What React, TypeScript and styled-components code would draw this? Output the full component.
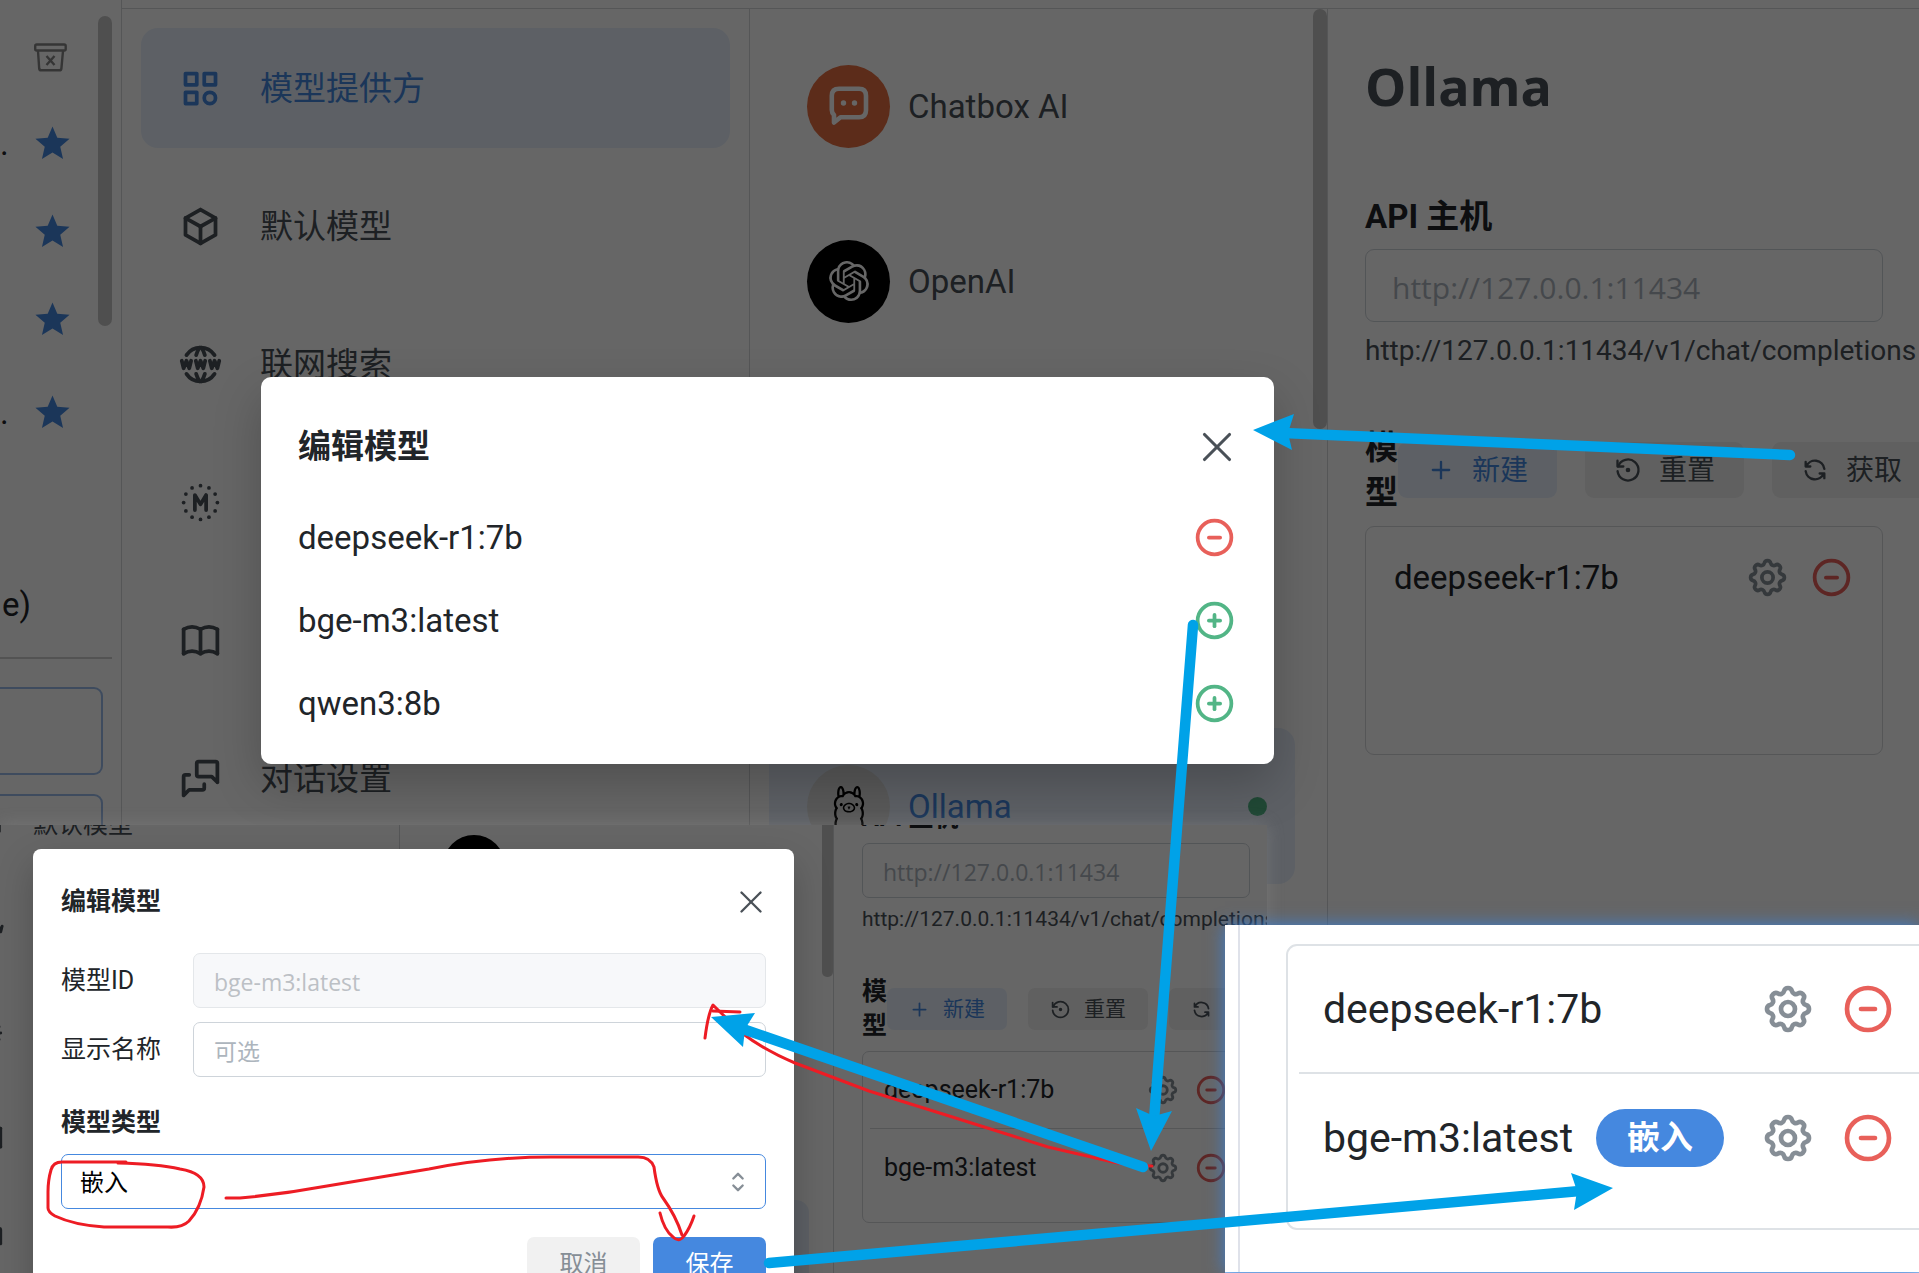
import React from 'react';
import styled, { createGlobalStyle, css, ThemeProvider } from 'styled-components';
import {
  TbBook,
  TbBox,
  TbCategory,
  TbCircleDottedLetterM,
  TbCircleMinus,
  TbCirclePlus,
  TbMessages,
  TbPlus,
  TbRefresh,
  TbRestore,
  TbSelector,
  TbSettings,
  TbWorldWww,
  TbX,
} from 'react-icons/tb';
import { MdStar } from 'react-icons/md';
import { SiOllama, SiOpenai } from 'react-icons/si';

/* Every screen is drawn by the same parts; the theme says how large. */
const u =
  (n: number) =>
  ({ theme }: any) =>
    `${Math.round(n * theme.k)}px`;

const uiFont = `Roboto, 'Noto Sans CJK SC', sans-serif`;
const fieldFont = `'Open Sans', 'Noto Sans CJK SC', sans-serif`;

const color = {
  text: '#212529',
  muted: '#495057',
  dimmed: '#868e96',
  placeholder: '#adb5bd',
  border: '#dee2e6',
  line: '#d4d7da',
  fieldBorder: '#ced4da',
  blue: '#4588df',
  blueLight: '#e8f1fd',
  grey: '#f0f0f0',
  red: '#e8605a',
  green: '#52b586',
  arrow: '#00a2e8',
  pen: '#ed1c24',
};

const GlobalStyle = createGlobalStyle`
  *, *::before, *::after { box-sizing: border-box; }
  html, body { margin: 0; overflow: hidden; }
  body { font-family: ${uiFont}; color: ${color.text}; background: #fff; }
  h1, h2, h3, p, ul { margin: 0; padding: 0; }
  ul { list-style: none; }
  button { border: 0; padding: 0; margin: 0; background: none; font: inherit; color: inherit; }
  svg { display: block; flex: none; }
`;

const Desktop = styled.main`
  position: relative;
  min-height: 100vh;
  overflow: hidden;
`;

const Page = styled.div<{ $rail?: boolean }>`
  display: grid;
  grid-template-columns: ${(p) => (p.$rail ? '122px ' : '')} minmax(0, 1fr);
  min-height: 100vh;
  font-size: ${u(33)};
  line-height: ${u(45)};
`;

/* ---------- conversation rail ---------- */

const Rail = styled.aside`
  position: relative;
  display: flex;
  flex-direction: column;
  border-right: 1px solid ${color.line};
`;

const RailScroll = styled.div`
  position: absolute;
  top: 16px;
  right: 9px;
  width: 14px;
  height: 310px;
  border-radius: 7px;
  background: #c6c6c6;
`;

const RailTop = styled.button`
  align-self: flex-start;
  margin: 41px 0 0 34px;
`;

const StarList = styled.ul`
  display: flex;
  flex-direction: column;
  padding-top: 26px;
`;

const StarRow = styled.li`
  display: flex;
  align-items: center;
  height: 88px;
  color: ${color.blue};
  gap: 24px;

  &:last-child {
    margin-top: 5px;
  }
`;

const Ellipsis = styled.span`
  width: 8px;
  text-align: center;
  color: ${color.text};
`;

const RailText = styled.p`
  margin-top: 126px;
  padding-left: 2px;
`;

const RailRule = styled.hr`
  width: 112px;
  margin: 30px 0 28px;
  border: 0;
  border-top: 2px solid #cfcfcf;
`;

const RailBox = styled.div`
  width: 103px;
  height: 88px;
  margin-bottom: 19px;
  border: 2px solid #9bbcec;
  border-left: 0;
  border-radius: 0 9px 9px 0;
`;

/* ---------- settings area ---------- */

const Settings = styled.div`
  display: flex;
  flex-direction: column;
  min-width: 0;
`;

const TopBar = styled.div`
  height: ${u(9)};
  border-bottom: 1px solid ${color.line};
`;

const Columns = styled.div`
  flex: 1;
  display: grid;
  grid-template-columns: ${u(628)} ${u(578)} minmax(0, 1fr);
`;

const Nav = styled.nav`
  display: flex;
  flex-direction: column;
  gap: ${u(18)};
  padding: ${u(19)};
  border-right: 1px solid ${color.line};
`;

const NavItem = styled.a<{ $active?: boolean }>`
  display: flex;
  align-items: center;
  flex: none;
  gap: ${u(37)};
  height: ${u(120)};
  padding-left: ${u(37)};
  border-radius: ${u(17)};
  text-decoration: none;
  color: ${(p) => (p.$active ? color.blue : color.muted)};
  background: ${(p) => (p.$active ? color.blueLight : 'transparent')};

  svg {
    width: ${u(45)};
    height: ${u(45)};
  }
`;

const Providers = styled.div`
  position: relative;
  display: flex;
  flex-direction: column;
  gap: ${u(19)};
  padding: ${u(19)} ${u(32)} ${u(19)} ${u(19)};
  border-right: 1px solid ${color.line};
`;

const ProviderScroll = styled.div`
  position: absolute;
  top: 0;
  right: 0;
  width: ${u(14)};
  height: ${u(420)};
  border-radius: ${u(7)};
  background: #c6c6c6;
`;

const Provider = styled.a<{ $active?: boolean }>`
  display: flex;
  align-items: center;
  flex: none;
  gap: ${u(18)};
  height: ${u(156)};
  padding: 0 ${u(28)} 0 ${u(38)};
  border-radius: ${u(17)};
  text-decoration: none;
  color: ${(p) => (p.$active ? color.blue : color.muted)};
  background: ${(p) => (p.$active ? color.blueLight : 'transparent')};
`;

const Avatar = styled.span<{ $bg: string; $fg: string }>`
  display: grid;
  place-items: center;
  width: ${u(83)};
  height: ${u(83)};
  border-radius: 50%;
  color: ${(p) => p.$fg};
  background: ${(p) => p.$bg};

  svg {
    width: ${u(40)};
    height: ${u(40)};
  }
`;

const Online = styled.span`
  width: ${u(19)};
  height: ${u(19)};
  margin-left: auto;
  border-radius: 50%;
  background: ${color.green};
`;

const Detail = styled.section`
  display: flex;
  flex-direction: column;
  min-width: 0;
  padding: ${u(48)} ${u(36)} 0 ${u(37)};
`;

const DetailTitle = styled.h1`
  font-family: ${fieldFont};
  font-size: ${u(52)};
  font-weight: 700;
  line-height: ${u(58)};
  color: ${color.muted};
  margin-bottom: ${u(79)};
`;

const FieldLabel = styled.label`
  font-weight: 700;
`;

const TextField = styled.input`
  width: 100%;
  min-width: 0;
  height: ${u(73)};
  padding: ${u(4)} ${u(26)} 0;
  border: 1px solid ${color.fieldBorder};
  border-radius: ${u(9)};
  font-family: ${fieldFont};
  font-size: ${u(30)};
  color: ${color.text};
  background: #fff;

  &::placeholder {
    color: ${color.placeholder};
    opacity: 1;
  }

  &:disabled {
    color: #bcc0c5;
    border-color: #e4e7ea;
    background: #f7f8fa;
  }
`;

const HostField = styled(TextField)`
  margin: ${u(10)} 0 ${u(11)};
`;

const Endpoint = styled.p`
  font-size: ${u(28)};
  line-height: ${u(36)};
  color: ${color.muted};
  white-space: nowrap;
`;

const ModelHead = styled.div`
  display: flex;
  align-items: center;
  margin: ${u(56)} 0 ${u(11)};
`;

const ModelLabel = styled.h2`
  flex: 0 0 1em;
  font-size: ${u(33)};
  font-weight: 700;
  line-height: ${u(45)};
`;

const HeadButtons = styled.div`
  display: flex;
  gap: ${u(28)};
`;

const SmallButton = styled.button<{ $primary?: boolean }>`
  display: flex;
  align-items: center;
  flex: none;
  gap: ${u(17)};
  height: ${u(56)};
  padding: 0 ${u(29)};
  border-radius: ${u(9)};
  font-size: ${u(28)};
  white-space: nowrap;
  color: ${(p) => (p.$primary ? color.blue : color.muted)};
  background: ${(p) => (p.$primary ? color.blueLight : color.grey)};

  svg {
    width: ${u(28)};
    height: ${u(28)};
  }
`;

const ModelBox = styled.ul`
  min-height: ${u(229)};
  padding: 0 ${u(9)};
  border: ${(p: any) => (p.theme.k > 1 ? `2px solid ${color.border}` : `1px solid ${color.line}`)};
  border-radius: ${u(9)};
  font-size: ${u(33)};
  line-height: ${u(45)};
`;

const ModelRow = styled.li`
  display: flex;
  align-items: center;
  gap: ${u(18)};
  height: ${u(101)};
  padding: 0 ${u(19)};

  &:not(:first-child) {
    height: ${u(104)};
    border-top: ${(p: any) => (p.theme.k > 1 ? `2px solid ${color.border}` : `1px solid ${color.line}`)};
  }
`;

const ModelName = styled.span`
  white-space: nowrap;
`;

const Tag = styled.span`
  padding: 0 ${u(25)};
  border-radius: ${u(24)};
  font-size: ${u(26)};
  font-weight: 700;
  line-height: ${u(46)};
  color: #fff;
  background: ${color.blue};
`;

const RowActions = styled.span`
  display: flex;
  gap: ${u(19)};
  margin-left: auto;
`;

const IconButton = styled.button<{ $tone: string }>`
  color: ${(p) => p.$tone};

  svg {
    width: ${u(45)};
    height: ${u(45)};
  }
`;

const CloseButton = styled(IconButton)`
  margin-right: ${u(-5)};

  svg {
    width: ${u(50)};
    height: ${u(50)};
  }
`;

/* ---------- dialogs ---------- */

const Dim = styled.div`
  position: absolute;
  inset: 0;
  background: rgba(0, 0, 0, 0.6);
`;

const dialogBase = css`
  position: absolute;
  background: #fff;
  border-radius: ${u(10)};
  box-shadow: 0 ${u(20)} ${u(48)} rgba(0, 0, 0, 0.22);
  font-size: ${u(33)};
  line-height: ${u(45)};
`;

const PickDialog = styled.section`
  ${dialogBase}
  left: 261px;
  top: 377px;
  width: 1013px;
  padding: 47px 37px 19px;
`;

const DialogHead = styled.header`
  display: flex;
  align-items: center;
  justify-content: space-between;
  height: ${u(45)};
`;

const DialogTitle = styled.h2`
  font-size: ${u(33)};
  line-height: ${u(45)};
  font-weight: 700;
`;

const PickList = styled.ul`
  margin-top: 27px;
`;

const PickRow = styled.li`
  display: flex;
  align-items: center;
  justify-content: space-between;
  height: 83px;
`;

const EditDialog = styled.form`
  ${dialogBase}
  left: 33px;
  top: 24px;
  width: 761px;
  padding: 36px 28px;
`;

const FormRows = styled.div`
  display: grid;
  grid-template-columns: 132px minmax(0, 1fr);
  align-items: center;
  row-gap: 14px;
  margin: 34px 0 29px;
`;

const TypeLabel = styled(FieldLabel)`
  display: block;
  margin-bottom: 14px;
`;

const SelectWrap = styled.div`
  position: relative;
  color: ${color.dimmed};

  svg {
    position: absolute;
    right: 14px;
    top: 14px;
    width: 28px;
    height: 28px;
  }
`;

const Select = styled.select`
  appearance: none;
  width: 100%;
  height: 55px;
  padding: 0 18px;
  border: 1px solid ${color.blue};
  border-radius: 7px;
  font-family: ${fieldFont};
  font-size: 24px;
  color: #000;
  background: #fff;
`;

const DialogButtons = styled.div`
  display: flex;
  justify-content: flex-end;
  gap: 13px;
  margin-top: 28px;
`;

const DialogButton = styled.button<{ $primary?: boolean }>`
  width: 113px;
  height: 54px;
  border-radius: 7px;
  font-size: 24px;
  color: ${(p) => (p.$primary ? '#fff' : color.dimmed)};
  background: ${(p) => (p.$primary ? color.blue : '#f1f1f1')};
`;

/* ---------- overlapping windows ---------- */

const EditWindow = styled.div`
  position: absolute;
  left: 0;
  top: 825px;
  bottom: 0;
  width: 1267px;
  overflow: hidden;
  background: #fff;
  box-shadow: 0 0 16px rgba(160, 160, 160, 0.3);
`;

const EditWindowPage = styled.div`
  position: absolute;
  left: -71px;
  right: -10px;
  top: -170px;
`;

const ResultWindow = styled.section`
  position: absolute;
  left: 1225px;
  right: 0;
  top: 925px;
  bottom: 1px;
  display: flex;
  background: #fff;
  box-shadow: 0 0 16px #3f7fd0, 0 1px 0 #9cc4f2;
`;

const ResultClip = styled.div`
  flex: 1;
  min-width: 0;
  margin-left: 13px;
  padding: 19px 0 0 46px;
  overflow: hidden;
  border-left: 2px solid #dfe2ea;

  ul {
    margin-right: -14px;
  }
`;

const Ink = styled.svg`
  position: absolute;
  left: 0;
  top: 0;
  width: 1919px;
  height: 1273px;
  pointer-events: none;
`;

/* ---------- drawings ---------- */

const ArchiveIcon = () => (
  <svg width="33" height="32" viewBox="0 0 33 32" fill="none" stroke="#868686" strokeWidth="2.4" strokeLinejoin="round">
    <rect x="1.2" y="3.5" width="30.5" height="6" rx="1.5" />
    <path d="M4 10l1.2 17.5q.2 1.8 2 1.8h18.2q1.8 0 2-1.8L29 10" />
    <path d="M12.5 15l8 9M20.5 15l-8 9" />
  </svg>
);

const ChatboxLogo = () => (
  <svg viewBox="0 0 40 40" fill="none" stroke="currentColor" strokeWidth="4.6">
    <path
      d="M10 2.8h20q7 0 7 7v14.5q0 7-7 7H11.5L5 36.5V29q-2.2-2-2.2-5V9.8q0-7 7.2-7z"
      strokeLinejoin="round"
    />
    <circle cx="14.5" cy="17" r="2.7" fill="currentColor" stroke="none" />
    <circle cx="25.5" cy="17" r="2.7" fill="currentColor" stroke="none" />
  </svg>
);

type ArrowProps = { from: [number, number]; neck: [number, number]; head: string };

const Arrow = ({ from, neck, head }: ArrowProps) => (
  <g fill={color.arrow} stroke={color.arrow}>
    <line x1={from[0]} y1={from[1]} x2={neck[0]} y2={neck[1]} strokeWidth="10.5" strokeLinecap="round" />
    <polygon points={head} stroke="none" />
  </g>
);

const Annotations = () => (
  <Ink viewBox="0 0 1919 1273" aria-hidden="true">
    <g fill="none" stroke={color.pen} strokeWidth="3" strokeLinecap="round" strokeLinejoin="round">
      <path d="M126 1162H62Q53 1162 51 1170Q48 1180 48 1192V1208Q48 1212 55 1216Q74 1225 104 1227H168Q182 1228 189 1221Q201 1208 204 1187Q204 1173 180 1169Q158 1164 118 1163" />
      <path d="M226 1198H240Q284 1194 327 1186L429 1169Q490 1157 551 1157H636Q650 1156 654 1167Q657 1190 663 1198Q676 1216 682 1235" />
      <path d="M660 1213Q664 1230 673 1237Q679 1243 684 1236Q690 1228 694 1216" />
      <path d="M1152 1166Q1130 1166 1113 1162L1048 1147L946 1115L869 1091L795 1063Q764 1050 742 1033Q722 1014 713 1005Q708 1014 705 1038" />
      <path d="M713 1011L740 1012" />
    </g>
    <Arrow from={[1790, 455]} neck={[1284, 433]} head="1253,430 1294,414 1288,433 1292,450" />
    <Arrow from={[1193, 625]} neck={[1154, 1120]} head="1151,1151 1136,1108 1154,1116 1172,1111" />
    <Arrow from={[1143, 1167]} neck={[740, 1028]} head="711,1017 755,1013 745,1029 743,1047" />
    <Arrow from={[769, 1263]} neck={[1580, 1191]} head="1613,1188 1571,1173 1577,1191 1574,1210" />
  </Ink>
);

/* ---------- composition ---------- */

type Model = { name: string; tag?: string };

const Models = ({ models }: { models: Model[] }) => (
  <ModelBox>
    {models.map((m) => (
      <ModelRow key={m.name}>
        <ModelName>{m.name}</ModelName>
        {m.tag && <Tag>{m.tag}</Tag>}
        <RowActions>
          <IconButton $tone={color.dimmed} aria-label="设置">
            <TbSettings />
          </IconButton>
          <IconButton $tone={color.red} aria-label="移除">
            <TbCircleMinus />
          </IconButton>
        </RowActions>
      </ModelRow>
    ))}
  </ModelBox>
);

const navIcons = [TbCategory, TbBox, TbWorldWww, TbCircleDottedLetterM, TbBook, TbMessages];

type SettingsProps = { id: string; nav: string[]; providers: string[]; title?: string; models: Model[] };

const avatars: Record<string, React.ReactNode> = {
  'Chatbox AI': (
    <Avatar $bg="#e66e41" $fg="#fff">
      <ChatboxLogo />
    </Avatar>
  ),
  OpenAI: (
    <Avatar $bg="#000" $fg="#fff">
      <SiOpenai />
    </Avatar>
  ),
  Ollama: (
    <Avatar $bg="#dedede" $fg="#000">
      <SiOllama />
    </Avatar>
  ),
};

const SettingsView = ({ id, nav, providers, title, models }: SettingsProps) => (
  <Settings>
    <TopBar />
    <Columns>
      <Nav>
        {navIcons.map((Icon, i) => (
          <NavItem key={i} href="#" $active={i === 0}>
            <Icon />
            {nav[i]}
          </NavItem>
        ))}
      </Nav>
      <Providers>
        {providers.map((name, i) => (
          <Provider key={i} href="#" $active={i === 4}>
            {avatars[name]}
            {name}
            {name === 'Ollama' && <Online />}
          </Provider>
        ))}
        <ProviderScroll />
      </Providers>
      <Detail>
        <DetailTitle>{title || '\u00a0'}</DetailTitle>
        <FieldLabel htmlFor={id}>API 主机</FieldLabel>
        <HostField id={id} placeholder="http://127.0.0.1:11434" />
        <Endpoint>http://127.0.0.1:11434/v1/chat/completions</Endpoint>
        <ModelHead>
          <ModelLabel>模型</ModelLabel>
          <HeadButtons>
            <SmallButton $primary>
              <TbPlus />
              新建
            </SmallButton>
            <SmallButton>
              <TbRestore />
              重置
            </SmallButton>
            <SmallButton>
              <TbRefresh />
              获取
            </SmallButton>
          </HeadButtons>
        </ModelHead>
        <Models models={models} />
      </Detail>
    </Columns>
  </Settings>
);

const pickable = [
  { name: 'deepseek-r1:7b', added: true },
  { name: 'bge-m3:latest', added: false },
  { name: 'qwen3:8b', added: false },
];

const stars = ['.', '', '', '.'];

export default function App() {
  return (
    <Desktop>
      <GlobalStyle />
      <ThemeProvider theme={{ k: 1 }}>
        <Page $rail>
          <Rail>
            <RailTop aria-label="清理">
              <ArchiveIcon />
            </RailTop>
            <StarList>
              {stars.map((s, i) => (
                <StarRow key={i}>
                  <Ellipsis>{s}</Ellipsis>
                  <MdStar size={41} />
                </StarRow>
              ))}
            </StarList>
            <RailText>e)</RailText>
            <RailRule />
            <RailBox />
            <RailBox />
            <RailScroll />
          </Rail>
          <SettingsView
            id="host"
            nav={['模型提供方', '默认模型', '联网搜索', '', '', '对话设置']}
            providers={['Chatbox AI', 'OpenAI', '', '', 'Ollama']}
            title="Ollama"
            models={[{ name: 'deepseek-r1:7b' }]}
          />
        </Page>
        <Dim />
        <PickDialog>
          <DialogHead>
            <DialogTitle>编辑模型</DialogTitle>
            <CloseButton $tone={color.muted} aria-label="关闭">
              <TbX strokeWidth={1.5} />
            </CloseButton>
          </DialogHead>
          <PickList>
            {pickable.map((m) => (
              <PickRow key={m.name}>
                <ModelName>{m.name}</ModelName>
                <IconButton $tone={m.added ? color.red : color.green} aria-label={m.added ? '移除' : '添加'}>
                  {m.added ? <TbCircleMinus /> : <TbCirclePlus />}
                </IconButton>
              </PickRow>
            ))}
          </PickList>
        </PickDialog>
      </ThemeProvider>

      <ThemeProvider theme={{ k: 0.75 }}>
        <EditWindow>
          <EditWindowPage>
            <Page>
              <SettingsView
                id="host-compact"
                nav={['', '默认模型']}
                providers={['', 'OpenAI', '', '', '']}
                models={[{ name: 'deepseek-r1:7b' }, { name: 'bge-m3:latest' }]}
              />
            </Page>
          </EditWindowPage>
          <Dim />
          <EditDialog>
            <DialogHead>
              <DialogTitle>编辑模型</DialogTitle>
              <CloseButton type="button" $tone={color.muted} aria-label="关闭">
                <TbX strokeWidth={1.5} />
              </CloseButton>
            </DialogHead>
            <FormRows>
              <label htmlFor="model-id">模型ID</label>
              <TextField id="model-id" defaultValue="bge-m3:latest" disabled />
              <label htmlFor="model-name">显示名称</label>
              <TextField id="model-name" placeholder="可选" />
            </FormRows>
            <TypeLabel htmlFor="model-type">模型类型</TypeLabel>
            <SelectWrap>
              <Select id="model-type" defaultValue="embedding">
                <option value="embedding">嵌入</option>
              </Select>
              <TbSelector />
            </SelectWrap>
            <DialogButtons>
              <DialogButton type="button">取消</DialogButton>
              <DialogButton type="submit" $primary>
                保存
              </DialogButton>
            </DialogButtons>
          </EditDialog>
        </EditWindow>
      </ThemeProvider>

      <ThemeProvider theme={{ k: 1.25 }}>
        <ResultWindow>
          <ResultClip>
            <Models models={[{ name: 'deepseek-r1:7b' }, { name: 'bge-m3:latest', tag: '嵌入' }]} />
          </ResultClip>
        </ResultWindow>
      </ThemeProvider>

      <Annotations />
    </Desktop>
  );
}
